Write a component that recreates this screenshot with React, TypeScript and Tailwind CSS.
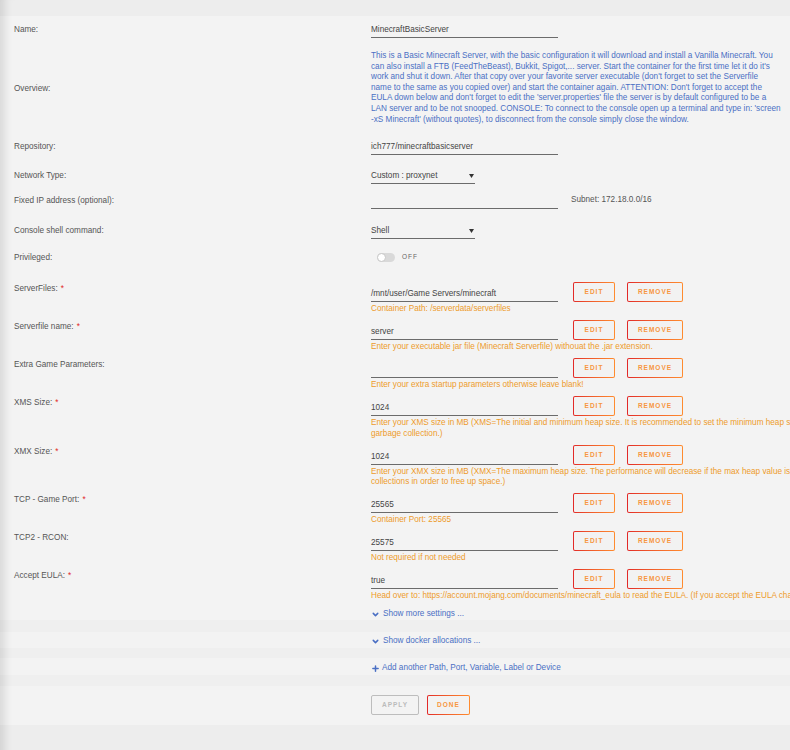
import { ChevronDown, Plus } from 'lucide-react'

const font = { fontFamily: '"Liberation Sans", Arial, sans-serif' }

function Label({ text, required }: { text: string; required?: boolean }) {
  return (
    <div className="pl-[14px] pt-[2px] text-[#555] leading-[10px]">
      {text}
      {required && <span className="text-[#e22828] ml-[3px]">*</span>}
    </div>
  )
}

function Input({ value, w = 'w-[187px]' }: { value?: string; w?: string }) {
  return (
    <div className={`${w} h-[18px] border-b border-[#6b6b6b] text-[#444] leading-[10px] flex items-end pb-[2px]`}>
      {value}
    </div>
  )
}

function Select({ value }: { value: string }) {
  return (
    <div className="w-[104px] h-[18px] border-b border-[#6b6b6b] text-[#444] leading-[10px] flex items-end justify-between pb-[2px] pr-[1px]">
      <span>{value}</span>
      <svg width="5" height="4" viewBox="0 0 5 4" className="mb-[3px]"><path d="M0 0h5L2.5 4z" fill="#333" /></svg>
    </div>
  )
}

function GradButton({ text, w }: { text: string; w: string }) {
  return (
    <div className={`${w} h-[20px] p-px rounded-[2px] bg-gradient-to-r from-[#e22828] to-[#ff8c2f]`}>
      <div className="w-full h-full rounded-[1px] bg-[#f2f2f2] flex items-center justify-center text-[6.5px] font-bold tracking-[1px] text-[#f7963f]">
        {text}
      </div>
    </div>
  )
}

// overview lines, broken where the template page breaks them
const overview = [
  'This is a Basic Minecraft Server, with the basic configuration it will download and install a Vanilla Minecraft. You',
  "can also install a FTB (FeedTheBeast), Bukkit, Spigot,... server. Start the container for the first time let it do it's",
  "work and shut it down. After that copy over your favorite server executable (don't forget to set the Serverfile",
  "name to the same as you copied over) and start the container again. ATTENTION: Don't forget to accept the",
  "EULA down below and don't forget to edit the 'server.properties' file the server is by default configured to be a",
  "LAN server and to be not snooped. CONSOLE: To connect to the console open up a terminal and type in: 'screen",
  "-xS Minecraft' (without quotes), to disconnect from the console simply close the window.",
]

type Field = { label: string; required?: boolean; value: string; help: string[] }

const fields: Field[] = [
  { label: 'ServerFiles:', required: true, value: '/mnt/user/Game Servers/minecraft', help: ['Container Path: /serverdata/serverfiles'] },
  { label: 'Serverfile name:', required: true, value: 'server', help: ['Enter your executable jar file (Minecraft Serverfile) withouat the .jar extension.'] },
  { label: 'Extra Game Parameters:', value: '', help: ['Enter your extra startup parameters otherwise leave blank!'] },
  {
    label: 'XMS Size:', required: true, value: '1024',
    help: [
      'Enter your XMS size in MB (XMS=The initial and minimum heap size. It is recommended to set the minimum heap size equivalent to the maximum heap size in order to minimize the',
      'garbage collection.)',
    ],
  },
  {
    label: 'XMX Size:', required: true, value: '1024',
    help: [
      'Enter your XMX size in MB (XMX=The maximum heap size. The performance will decrease if the max heap value is set lower than is required to fill the heap. Set a bit high to avoid garbage',
      'collections in order to free up space.)',
    ],
  },
  { label: 'TCP - Game Port:', required: true, value: '25565', help: ['Container Port: 25565'] },
  { label: 'TCP2 - RCON:', value: '25575', help: ['Not required if not needed'] },
  {
    label: 'Accept EULA:', required: true, value: 'true',
    help: ["Head over to: https://account.mojang.com/documents/minecraft_eula to read the EULA. (If you accept the EULA change the value to 'true')"],
  },
]

export default function App() {
  return (
    <div
      style={font}
      className="min-h-screen w-full overflow-hidden bg-[#f3f3f3] text-[8.2px] shadow-[inset_12px_0_10px_-8px_rgba(0,0,0,0.12)]"
    >
      {/* top strip */}
      <div className="h-[16px] bg-black/[0.025]" />

      {/* basic info */}
      <div className="grid grid-cols-[371px_1fr] items-center mt-[4px]">
        <Label text="Name:" />
        <Input value="MinecraftBasicServer" />
      </div>

      <div className="grid grid-cols-[371px_1fr] items-center mt-[13px]">
        <Label text="Overview:" />
        <div className="text-[#4a6fc4] leading-[10.6px] whitespace-nowrap">
          {overview.map((l) => (
            <div key={l}>{l}</div>
          ))}
        </div>
      </div>

      <div className="grid grid-cols-[371px_1fr] items-center mt-[12px]">
        <Label text="Repository:" />
        <Input value="ich777/minecraftbasicserver" />
      </div>

      <div className="grid grid-cols-[371px_1fr] items-center mt-[11px]">
        <Label text="Network Type:" />
        <Select value="Custom : proxynet" />
      </div>

      <div className="grid grid-cols-[371px_1fr] items-center mt-[7px]">
        <Label text="Fixed IP address (optional):" />
        <div className="flex items-center">
          <Input />
          <span className="ml-[13px] text-[#555]">Subnet: 172.18.0.0/16</span>
        </div>
      </div>

      <div className="grid grid-cols-[371px_1fr] items-center mt-[12px]">
        <Label text="Console shell command:" />
        <Select value="Shell" />
      </div>

      <div className="grid grid-cols-[371px_1fr] items-center mt-[9px] h-[18px]">
        <Label text="Privileged:" />
        <div className="flex items-center pl-[6px]">
          <div className="w-[18px] h-[9px] rounded-full bg-[#d9d9d9] flex items-center">
            <div className="w-[9px] h-[9px] rounded-full bg-white border border-[#c8c8c8]" />
          </div>
          <span className="ml-[7px] text-[6.5px] tracking-[1px] text-[#666]">OFF</span>
        </div>
      </div>

      {/* config fields */}
      <div className="mt-[16px]">
        {fields.map((f) => (
          <div key={f.label} className="grid grid-cols-[371px_1fr] items-start pb-[5.5px]">
            <Label text={f.label} required={f.required} />
            <div className="flex items-start">
              <div className="w-[187px] shrink-0 pt-[2px]">
                <Input value={f.value} />
                <div className="mt-[2px] leading-[10.5px] text-[#ee9b2b] whitespace-nowrap">
                  {f.help.map((h) => (
                    <div key={h}>{h}</div>
                  ))}
                </div>
              </div>
              <div className="flex gap-[12px] ml-[15px]">
                <GradButton text="EDIT" w="w-[42px]" />
                <GradButton text="REMOVE" w="w-[56px]" />
              </div>
            </div>
          </div>
        ))}
      </div>

      {/* toggles */}
      <div className="grid grid-cols-[371px_1fr] h-[13px] items-start pt-[2px]">
        <div />
        <div className="flex items-center gap-[3px] leading-[10px] text-[#4a6fc4]">
          <ChevronDown size={9} strokeWidth={4} />
          <span>Show more settings ...</span>
        </div>
      </div>
      <div className="h-[12px] bg-black/[0.015]" />
      <div className="grid grid-cols-[371px_1fr] h-[16px] items-start pt-[4px]">
        <div />
        <div className="flex items-center gap-[3px] leading-[10px] text-[#4a6fc4]">
          <ChevronDown size={9} strokeWidth={4} />
          <span>Show docker allocations ...</span>
        </div>
      </div>
      <div className="h-[10px] bg-black/[0.015]" />
      <div className="grid grid-cols-[371px_1fr] h-[17px] items-start pt-[5px]">
        <div />
        <div className="flex items-center gap-[2px] leading-[10px] text-[#4a6fc4]">
          <Plus size={9} strokeWidth={4} />
          <span>Add another Path, Port, Variable, Label or Device</span>
        </div>
      </div>
      <div className="h-[11px] bg-black/[0.015]" />

      {/* actions */}
      <div className="grid grid-cols-[371px_1fr] pt-[9px] pb-[10px]">
        <div />
        <div className="flex gap-[8px]">
          <div className="w-[48px] h-[20px] rounded-[2px] border border-[#bdbdbd] flex items-center justify-center text-[6.5px] font-bold tracking-[1px] text-[#bbb]">
            APPLY
          </div>
          <GradButton text="DONE" w="w-[43px]" />
        </div>
      </div>
      <div className="h-[40px] bg-black/[0.025]" />
    </div>
  )
}
